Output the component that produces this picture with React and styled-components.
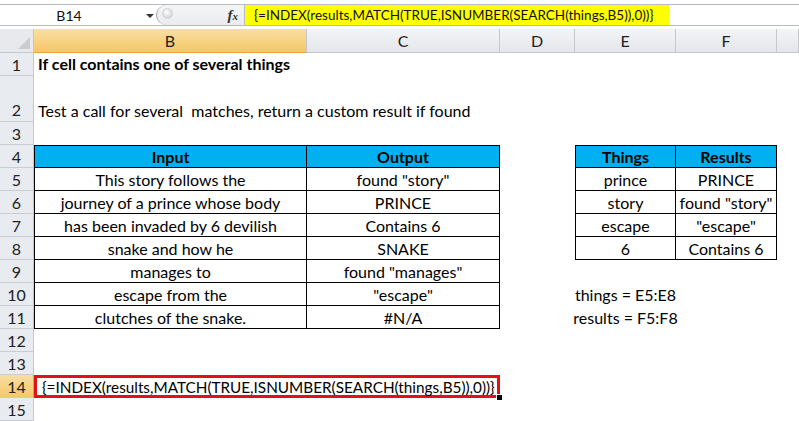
import styled, { createGlobalStyle } from "styled-components";

const FORMULA = "{=INDEX(results,MATCH(TRUE,ISNUMBER(SEARCH(things,B5)),0))}";
const COLS = ["B", "C", "D", "E", "F", "G"];

// where the bordered tables sit
const tables = [
  { cols: ["B", "C"], from: 4, to: 11 },
  { cols: ["E", "F"], from: 4, to: 8 },
];

const rows = [
  { n: 1, h: 23, cells: { B: { text: "If cell contains one of several things", bold: true, align: "left" } } },
  { n: 2, h: 46, cells: { B: { text: "Test a call for several  matches, return a custom result if found", align: "left", bottom: true } } },
  { n: 3, h: 23, cells: {} },
  {
    n: 4,
    h: 23,
    cells: {
      B: { text: "Input", head: true },
      C: { text: "Output", head: true },
      E: { text: "Things", head: true },
      F: { text: "Results", head: true },
    },
  },
  { n: 5, h: 23, cells: { B: { text: "This story follows the" }, C: { text: 'found "story"' }, E: { text: "prince" }, F: { text: "PRINCE" } } },
  { n: 6, h: 23, cells: { B: { text: "journey of a prince whose body" }, C: { text: "PRINCE" }, E: { text: "story" }, F: { text: 'found "story"' } } },
  { n: 7, h: 23, cells: { B: { text: "has been invaded by 6 devilish" }, C: { text: "Contains 6" }, E: { text: "escape" }, F: { text: '"escape"' } } },
  { n: 8, h: 23, cells: { B: { text: "snake and how he" }, C: { text: "SNAKE" }, E: { text: "6" }, F: { text: "Contains 6" } } },
  { n: 9, h: 23, cells: { B: { text: "manages to" }, C: { text: 'found "manages"' } } },
  { n: 10, h: 23, cells: { B: { text: "escape from the" }, C: { text: '"escape"' }, E: { text: "things = E5:E8" } } },
  { n: 11, h: 23, cells: { B: { text: "clutches of the snake." }, C: { text: "#N/A" }, E: { text: "results = F5:F8" } } },
  { n: 12, h: 23, cells: {} },
  { n: 13, h: 23, cells: {} },
  { n: 14, h: 23, cells: {}, active: true },
  { n: 15, h: 23, cells: {} },
];

function edges(col, row) {
  for (const t of tables) {
    if (t.cols.includes(col) && row >= t.from && row <= t.to) {
      return { box: true, top: row === t.from, left: col === t.cols[0] };
    }
  }
  return { box: false };
}

const GlobalStyle = createGlobalStyle`
  html, body {
    margin: 0;
    padding: 0;
    background: #ffffff;
    overflow: hidden;
  }
  body {
    font-family: Lato, "Open Sans", sans-serif;
    color: #000;
  }
`;

const Page = styled.div`
  width: 799px;
  height: 421px;
  display: flex;
  flex-direction: column;
  background: #fff;
`;

const FormulaBar = styled.div`
  margin-top: 4px;
  height: 22px;
  display: flex;
  align-items: stretch;
  border-top: 1px solid #b7bcc4;
  border-bottom: 1px solid #b7bcc4;
  box-sizing: border-box;
  background: #fff;
`;

const NameBox = styled.div`
  width: 156px;
  position: relative;
  display: flex;
  align-items: center;
  justify-content: center;
  padding-right: 18px;
  box-sizing: border-box;
  font-size: 14px;
  color: #111;
`;

const Caret = styled.span`
  position: absolute;
  right: 2px;
  top: 9px;
  width: 0;
  height: 0;
  border-left: 4px solid transparent;
  border-right: 4px solid transparent;
  border-top: 4px solid #333;
`;

const Divider = styled.div`
  width: 88px;
  display: flex;
  align-items: center;
  justify-content: space-between;
  background: linear-gradient(#f4f5f7, #e9ebee);
  border-left: 1px solid #9aa3ae;
  border-radius: 11px 0 0 11px;
  padding: 0 6px 0 5px;
  box-sizing: border-box;
`;

const Knob = styled.span`
  width: 9px;
  height: 9px;
  border-radius: 50%;
  background: radial-gradient(circle at 40% 35%, #ffffff, #c2c6cc);
  border: 1px solid #d0d3d8;
  margin-bottom: 4px;
`;

const Fx = styled.span`
  font-family: "Liberation Serif", serif;
  font-style: italic;
  font-weight: bold;
  font-size: 15px;
  color: #333;

  small {
    font-size: 11px;
  }
`;

const FormulaInput = styled.div`
  flex: 1;
  display: flex;
  align-items: stretch;
  border-left: 1px solid #b7bcc4;
`;

const Highlight = styled.span`
  background: #ffff00;
  display: flex;
  align-items: center;
  width: 424px;
  box-sizing: border-box;
  padding: 0 0 0 9px;
  font-size: 13.5px;
  color: #111;
  white-space: nowrap;
`;

const Sheet = styled.div`
  margin-top: 3px;
  display: grid;
  grid-template-columns: 34px 273px 193px 75px 101px 101px 1fr;
  grid-template-rows: 24px ${(p) => p.$rows};
`;

const Corner = styled.div`
  background: #e7e9ec;
  border-right: 1px solid #c4c8ce;
  border-bottom: 1px solid #c4c8ce;
  position: relative;

  &::after {
    content: "";
    position: absolute;
    right: 3px;
    bottom: 3px;
    border-left: 12px solid transparent;
    border-bottom: 12px solid #c9cbcf;
  }
`;

const ColHead = styled.div`
  display: flex;
  align-items: center;
  justify-content: center;
  font-size: 16px;
  color: #222;
  box-sizing: border-box;
  border-right: 1px solid #c4c8ce;
  border-bottom: 1px solid ${(p) => (p.$active ? "#e9a33c" : "#c4c8ce")};
  background: ${(p) =>
    p.$active
      ? "linear-gradient(#f9dea3, #f5c866)"
      : "linear-gradient(#f3f4f6, #e4e6ea)"};
`;

const RowHead = styled.div`
  display: flex;
  align-items: ${(p) => (p.$bottom ? "flex-end" : "center")};
  justify-content: center;
  padding-bottom: ${(p) => (p.$bottom ? "2px" : "0")};
  font-size: 16px;
  color: #222;
  box-sizing: border-box;
  border-right: 1px solid ${(p) => (p.$active ? "#e9a33c" : "#c4c8ce")};
  border-bottom: 1px solid #c9cdd3;
  background: ${(p) => (p.$active ? "linear-gradient(#f9dea3, #f5c866)" : "#e8ebef")};
`;

const Cell = styled.div`
  position: relative;
  display: flex;
  align-items: ${(p) => (p.$bottom ? "flex-end" : "center")};
  justify-content: ${(p) => (p.$align === "left" ? "flex-start" : "center")};
  padding: ${(p) => (p.$align === "left" ? "0 0 2px 4px" : "0")};
  box-sizing: border-box;
  min-width: 0;
  white-space: pre;
  font-size: 16px;
  font-weight: ${(p) => (p.$bold || p.$head ? 700 : 400)};
  background: ${(p) => (p.$head ? "#00b0f0" : "transparent")};
  border-right: ${(p) => (p.$box ? "1px solid #000" : "none")};
  border-bottom: ${(p) => (p.$box ? "1px solid #000" : "none")};
  border-top: ${(p) => (p.$top ? "1px solid #000" : "none")};
  border-left: ${(p) => (p.$left ? "1px solid #000" : "none")};
`;

const Marked = styled.div`
  grid-column: span 2;
  position: relative;
  display: flex;
  align-items: center;
  padding-left: 5px;
  box-sizing: border-box;
  border: 3px solid #e3101a;
  font-size: 15.3px;
  white-space: nowrap;
`;

const FillHandle = styled.span`
  position: absolute;
  right: -6px;
  bottom: -6px;
  width: 5px;
  height: 5px;
  background: #000;
  border: 1px solid #fff;
`;

function SheetRow({ row }) {
  return (
    <>
      <RowHead $active={row.active} $bottom={row.h > 23}>
        {row.n}
      </RowHead>
      {row.active ? (
        <>
          <Marked>
            {FORMULA}
            <FillHandle />
          </Marked>
          {COLS.slice(2).map((c) => (
            <Cell key={c} />
          ))}
        </>
      ) : (
        COLS.map((c) => {
          const cell = row.cells[c] || {};
          const e = edges(c, row.n);
          return (
            <Cell
              key={c}
              $align={cell.align}
              $bold={cell.bold}
              $head={cell.head}
              $bottom={cell.bottom}
              $box={e.box}
              $top={e.top}
              $left={e.left}
            >
              {cell.text}
            </Cell>
          );
        })
      )}
    </>
  );
}

export default function App() {
  const rowSizes = rows.map((r) => `${r.h}px`).join(" ");
  return (
    <Page>
      <GlobalStyle />
      <FormulaBar>
        <NameBox>
          B14
          <Caret />
        </NameBox>
        <Divider>
          <Knob />
          <Fx>
            f<small>x</small>
          </Fx>
        </Divider>
        <FormulaInput>
          <Highlight>{FORMULA}</Highlight>
        </FormulaInput>
      </FormulaBar>
      <Sheet $rows={rowSizes}>
        <Corner />
        {COLS.map((c) => (
          <ColHead key={c} $active={c === "B"}>
            {c === "G" ? "" : c}
          </ColHead>
        ))}
        {rows.map((r) => (
          <SheetRow key={r.n} row={r} />
        ))}
      </Sheet>
    </Page>
  );
}
